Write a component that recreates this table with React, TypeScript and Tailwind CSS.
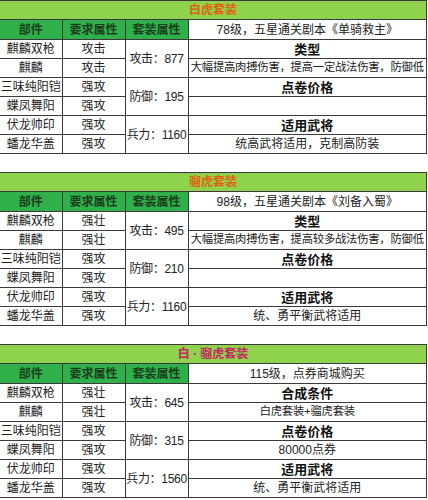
const sets = [
  {
    title: "白虎套装",
    titleClass: "text-[#e0620d]",
    reqs: ["攻击", "攻击", "强攻", "强攻", "强攻", "强攻"],
    stats: ["攻击：877", "防御：195", "兵力：1160"],
    info: [
      "78级，五星通关剧本《单骑救主》",
      "类型",
      "大幅提高肉搏伤害，提高一定战法伤害，防御低",
      "点卷价格",
      "",
      "适用武将",
      "统高武将适用，克制高防装",
    ],
  },
  {
    title: "骝虎套装",
    titleClass: "text-[#e0620d]",
    reqs: ["强壮", "强壮", "强攻", "强攻", "强攻", "强攻"],
    stats: ["攻击：495", "防御：210", "兵力：1160"],
    info: [
      "98级，五星通关剧本《刘备入蜀》",
      "类型",
      "大幅提高肉搏伤害，提高较多战法伤害，防御低",
      "点卷价格",
      "",
      "适用武将",
      "统、勇平衡武将适用",
    ],
  },
  {
    title: "白 · 骝虎套装",
    titleClass: "text-[#c2275f]",
    reqs: ["强壮", "强壮", "强攻", "强攻", "强攻", "强攻"],
    stats: ["攻击：645", "防御：315", "兵力：1560"],
    info: [
      "115级，点券商城购买",
      "合成条件",
      "白虎套装+骝虎套装",
      "点卷价格",
      "80000点券",
      "适用武将",
      "统、勇平衡武将适用",
    ],
  },
]

const parts = ["麒麟双枪", "麒麟", "三味纯阳铠", "蝶凤舞阳", "伏龙帅印", "蟠龙华盖"]

const cell = "border border-[#3a3a3a] text-center align-middle p-0 leading-none whitespace-nowrap overflow-hidden"

function SetTable({ set }: { set: (typeof sets)[number] }) {
  return (
    <table className="w-[427px] table-fixed border-collapse text-[12px] text-[#222]">
      <colgroup>
        <col className="w-[62px]" />
        <col className="w-[63px]" />
        <col className="w-[63px]" />
        <col />
      </colgroup>
      <tbody>
        <tr className="h-[19px]">
          <td colSpan={4} className={`${cell} border-l-0 bg-[#8fd24e] font-bold ${set.titleClass}`}>
            {set.title}
          </td>
        </tr>
        <tr className="h-[20px]">
          <td className={`${cell} border-l-0 bg-[#2fb04a] font-bold text-[#1b3d1b]`}>部件</td>
          <td className={`${cell} bg-[#2fb04a] font-bold text-[#1b3d1b]`}>要求属性</td>
          <td className={`${cell} bg-[#2fb04a] font-bold text-[#1b3d1b]`}>套装属性</td>
          <td className={`${cell} bg-white`}>{set.info[0]}</td>
        </tr>
        {parts.map((p, i) => (
          <tr key={p} className="h-[19px]">
            <td className={`${cell} border-l-0`}>{p}</td>
            <td className={cell}>{set.reqs[i]}</td>
            {i % 2 === 0 && (
              <td rowSpan={2} className={`${cell} tracking-[-0.3px]`}>
                {set.stats[i / 2]}
              </td>
            )}
            <td
              className={`${cell} ${i % 2 === 0 ? "font-bold text-[13px] text-[#111]" : ""} ${
                i === 1 ? "text-[11.3px] tracking-[-0.2px]" : ""
              }`}
            >
              {set.info[i + 1]}
            </td>
          </tr>
        ))}
      </tbody>
    </table>
  )
}

export default function App() {
  return (
    <div
      className="w-[428px] h-[500px] overflow-hidden bg-white flex flex-col gap-[18px]"
      style={{ fontFamily: '"Liberation Sans", "Noto Sans CJK SC", sans-serif' }}
    >
      {sets.map((s) => (
        <SetTable key={s.title} set={s} />
      ))}
    </div>
  )
}
